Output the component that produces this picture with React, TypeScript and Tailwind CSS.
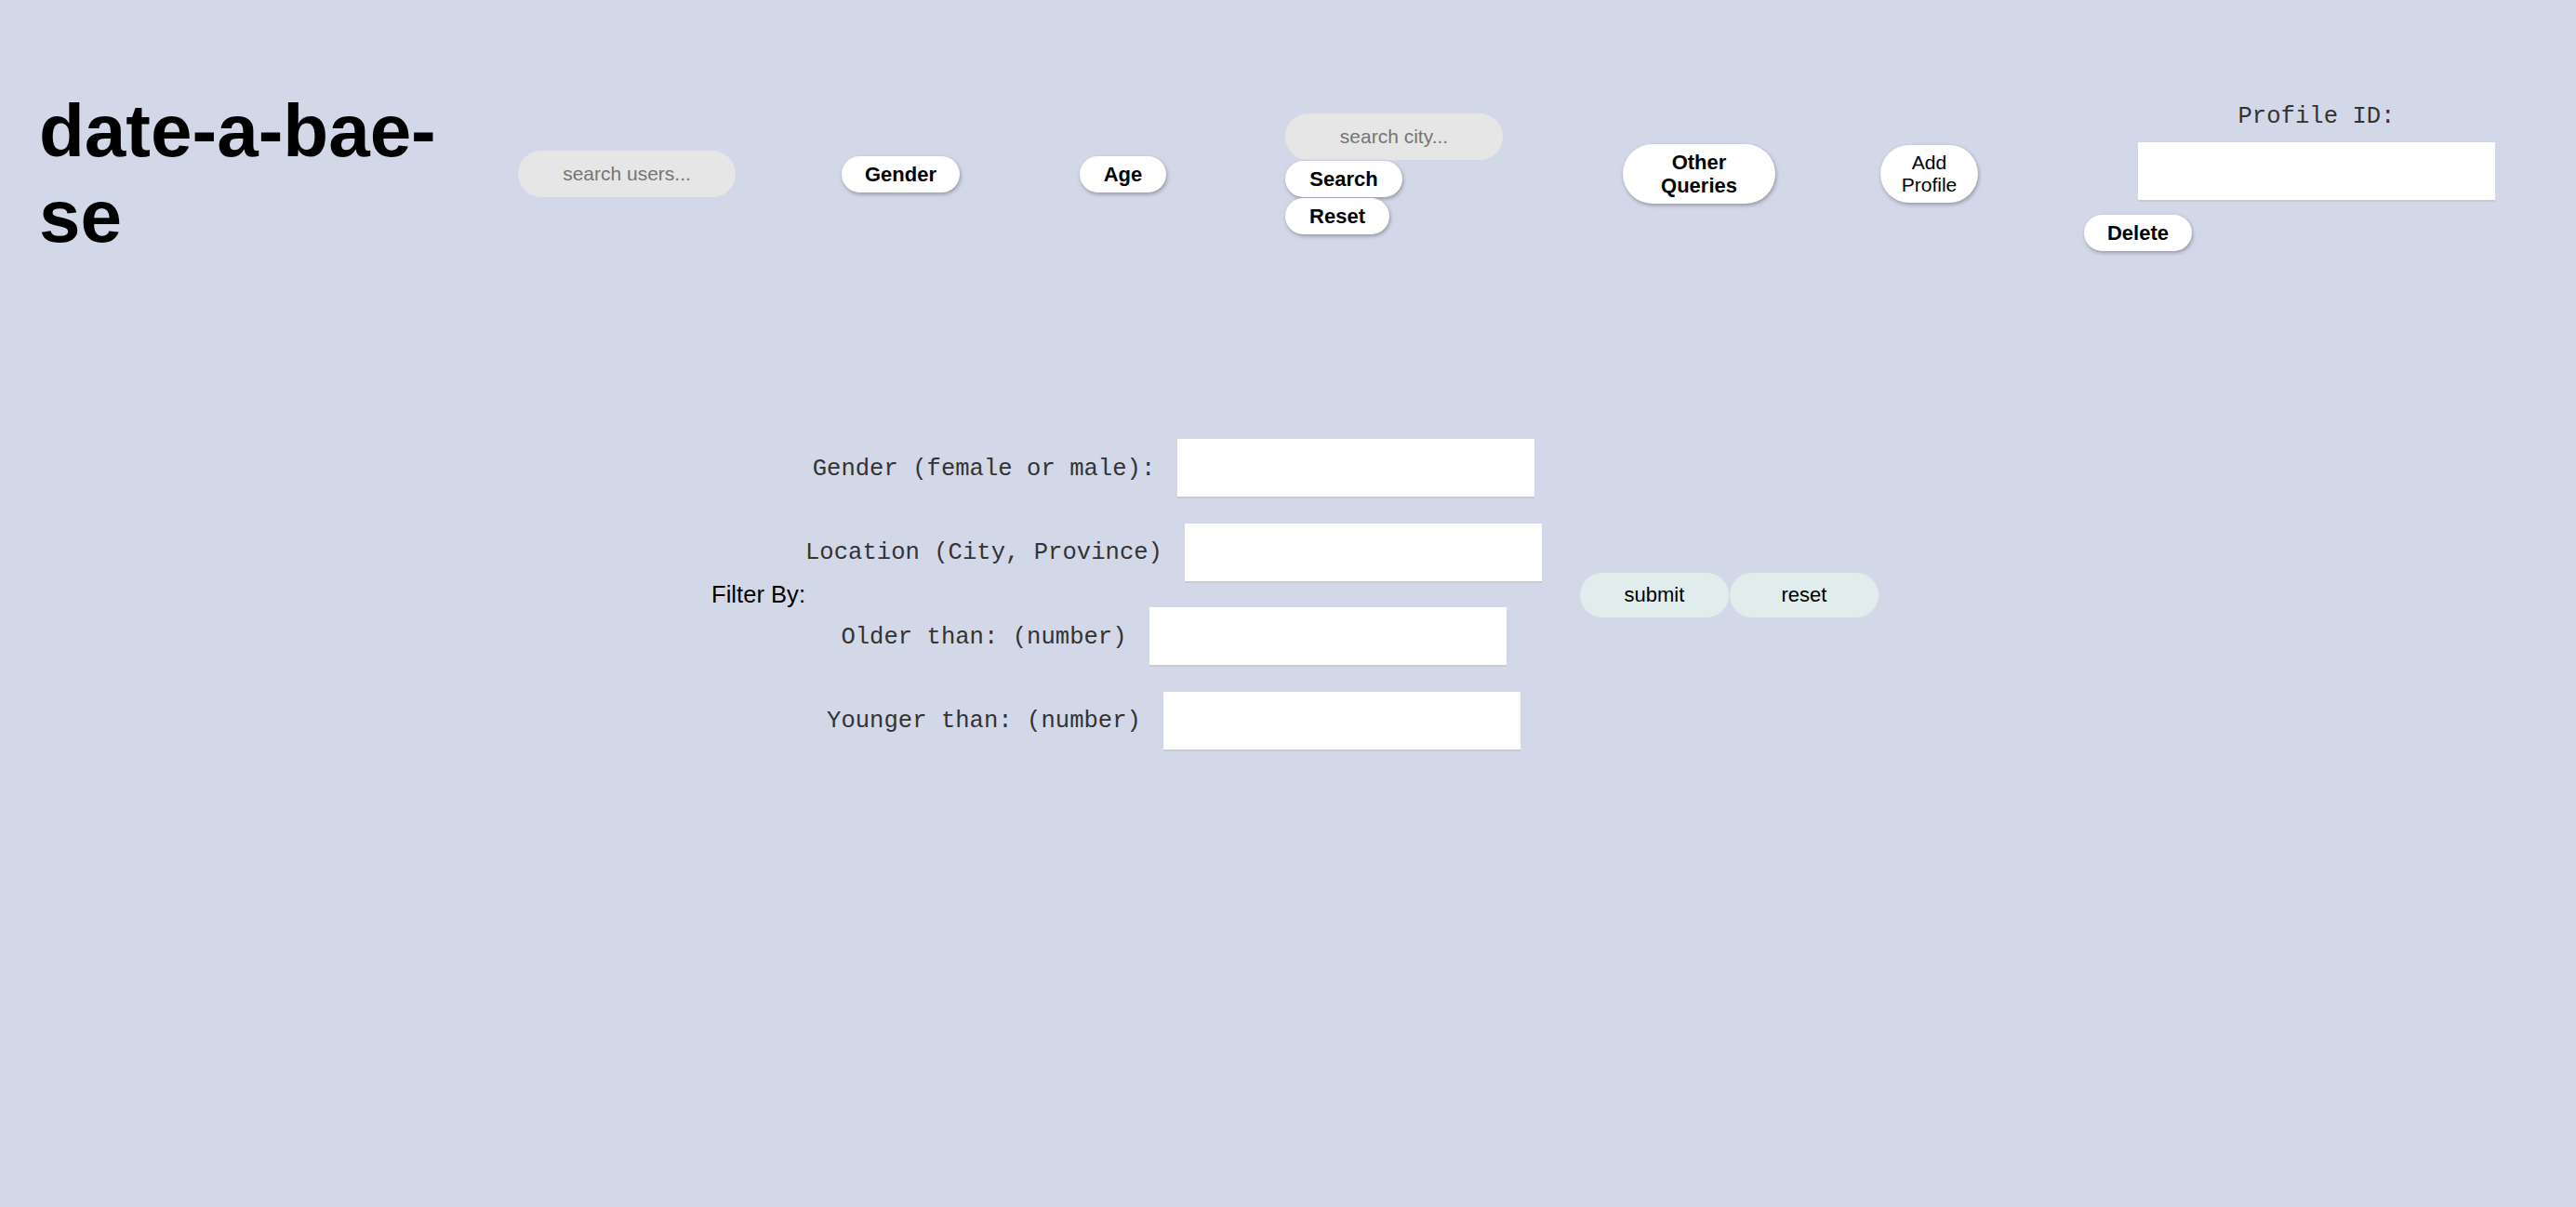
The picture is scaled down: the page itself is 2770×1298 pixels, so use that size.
import { useState } from "react";

const pill =
  "rounded-full bg-white py-[7px] text-center text-[22px] font-bold leading-[25px] shadow-[1px_2px_4px_rgba(0,0,0,0.3)]";
const searchBox =
  "h-[50px] w-[234px] rounded-full bg-[#e6e6e6] text-center text-[21px] outline-none placeholder:text-[#757575]";
const field = "h-[64px] w-[384px] shrink-0 border-b-2 border-[#c9cbd2] bg-white outline-none";
const mono = "font-['Liberation_Mono','Courier_New',monospace] text-[25.6px] leading-[29px] text-[#333]";

const filters = [
  { label: "Gender (female or male):", key: "gender" },
  { label: "Location (City, Province)", key: "location" },
  { label: "Older than: (number)", key: "older" },
  { label: "Younger than: (number)", key: "younger" },
];

export default function App() {
  const [values, setValues] = useState<Record<string, string>>({});

  return (
    <div className="min-h-screen bg-[#d3d8e9] font-['Liberation_Sans',Arial,sans-serif] text-black">
      <header className="flex items-center pl-[42px] pt-[95px]">
        <h1 className="w-[460px] shrink-0 text-[80px] font-bold leading-[92px]">date-a-bae-se</h1>

        <input placeholder="search users..." className={`ml-[55px] ${searchBox}`} />

        <button type="button" className={`ml-[114px] w-[127px] ${pill}`}>
          Gender
        </button>
        <button type="button" className={`ml-[129px] w-[93px] ${pill}`}>
          Age
        </button>

        <div className="ml-[128px] flex flex-col items-start gap-px">
          <input placeholder="search city..." className={searchBox} />
          <button type="button" className={`w-[126px] ${pill}`}>
            Search
          </button>
          <button type="button" className={`w-[112px] ${pill}`}>
            Reset
          </button>
        </div>

        <button type="button" className={`ml-[129px] w-[164px] px-[25px] ${pill}`}>
          Other Queries
        </button>

        <button
          type="button"
          className="ml-[113px] w-[105px] rounded-full bg-white px-[20px] py-[7px] text-center text-[21px] leading-[24px] shadow-[1px_2px_4px_rgba(0,0,0,0.3)]"
        >
          Add Profile
        </button>

        <div className="ml-[114px] mt-[6px] flex w-[500px] flex-col">
          <label className={`text-center ${mono}`}>Profile ID:</label>
          <input className={`mx-auto mt-[13px] ${field}`} />
          <button type="button" className={`mt-[14px] w-[116px] ${pill}`}>
            Delete
          </button>
        </div>
      </header>

      <form
        className="mt-[193px] flex items-center justify-center pl-[15px]"
        onSubmit={(e) => e.preventDefault()}
      >
        <span className="text-[25.6px] leading-[29px]">Filter By:</span>

        <div className="flex flex-col items-center gap-[26.5px]">
          {filters.map((f) => (
            <div key={f.key} className="flex items-center gap-[24px]">
              <label className={`whitespace-pre ${mono}`}>{f.label}</label>
              <input
                value={values[f.key] ?? ""}
                onChange={(e) => setValues((v) => ({ ...v, [f.key]: e.target.value }))}
                className={field}
              />
            </div>
          ))}
        </div>

        <div className="ml-[41px] flex gap-px">
          <button type="submit" className="h-[48px] w-[160px] rounded-full bg-[#e1ecec] text-[22px]">
            submit
          </button>
          <button
            type="button"
            onClick={() => setValues({})}
            className="h-[48px] w-[160px] rounded-full bg-[#e1ecec] text-[22px]"
          >
            reset
          </button>
        </div>
      </form>
    </div>
  );
}
